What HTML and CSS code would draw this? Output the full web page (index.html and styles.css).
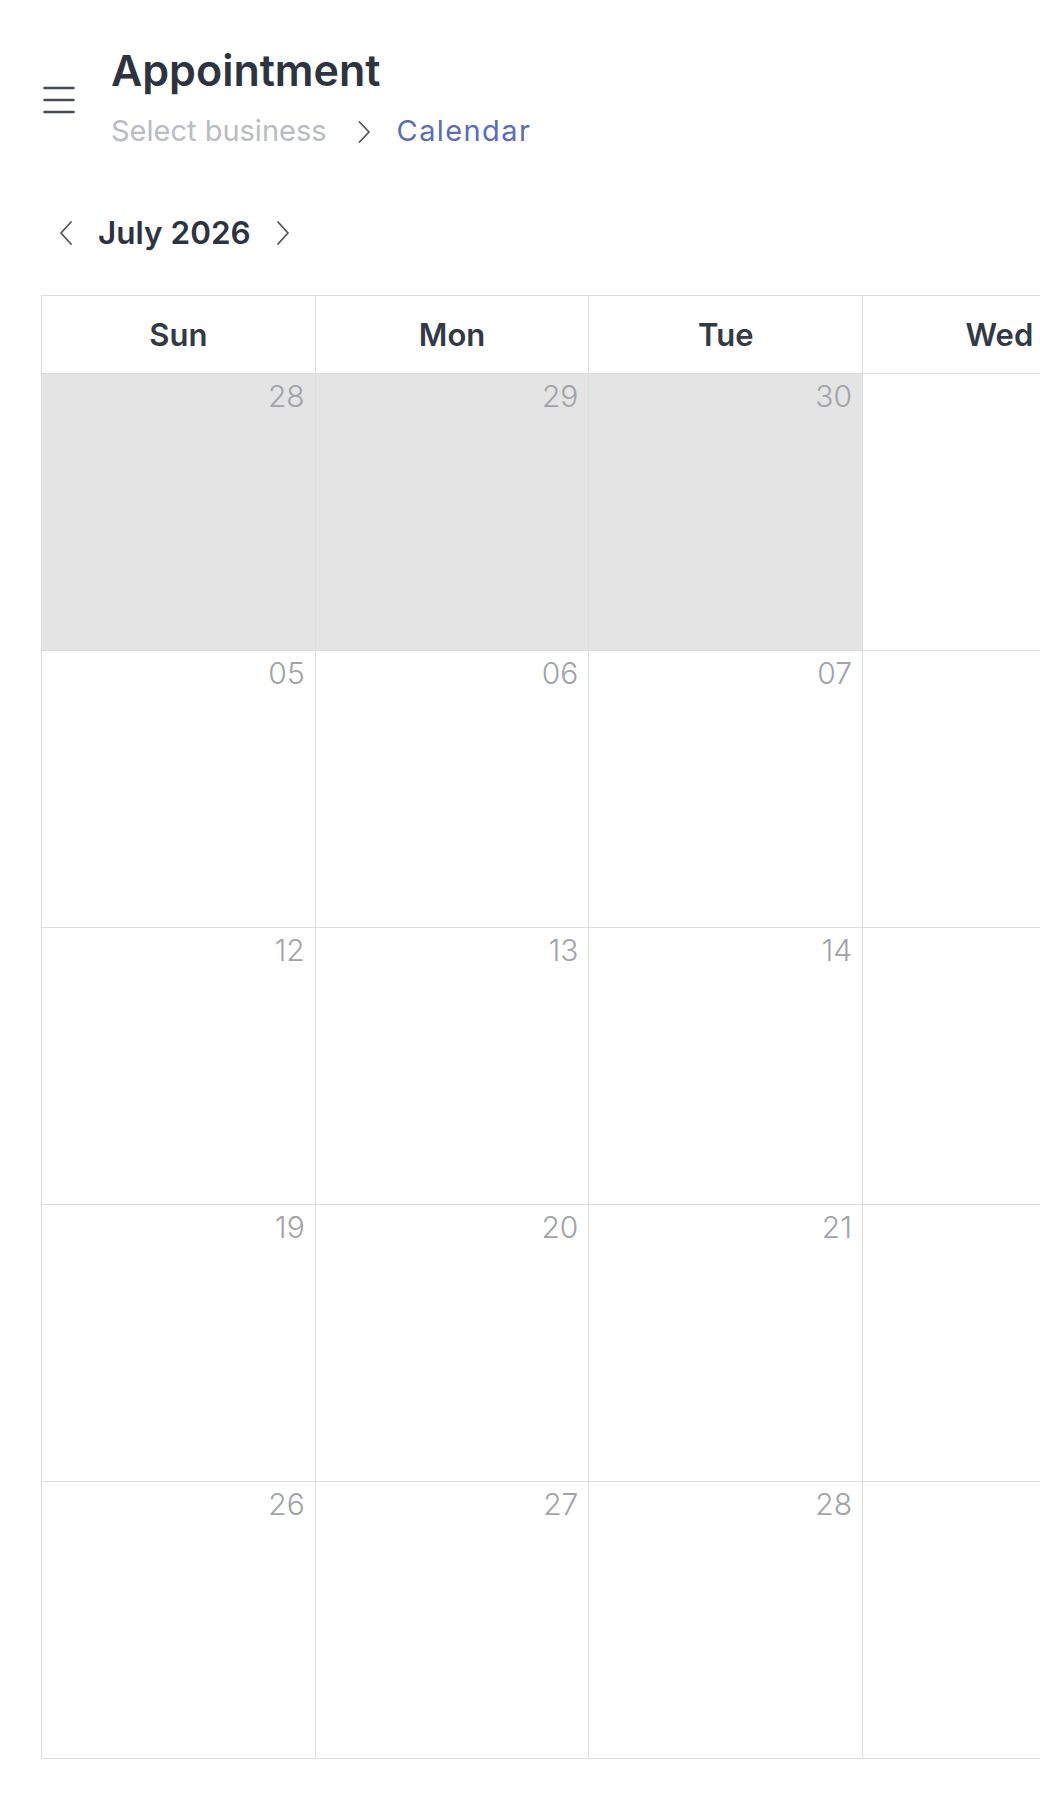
FILE: index.html
```html
<!DOCTYPE html>
<html lang="en">
<head>
<meta charset="utf-8">
<title>Appointment – Calendar</title>
<link rel="stylesheet" href="styles.css">
</head>
<body>
<div class="page">
  <header class="topbar">
    <button class="menu-btn" aria-label="Menu">
      <svg width="32" height="28" viewBox="0 0 32 28" fill="none" stroke="#454b57" stroke-width="2.5" stroke-linecap="round">
        <line x1="1.5" y1="2" x2="30.5" y2="2"/>
        <line x1="1.5" y1="14" x2="30.5" y2="14"/>
        <line x1="1.5" y1="26" x2="30.5" y2="26"/>
      </svg>
    </button>
    <div class="titles">
      <h1 class="title">Appointment</h1>
      <nav class="crumbs">
        <span class="crumb crumb-muted">Select business</span>
        <svg class="crumb-sep" width="14" height="24" viewBox="0 0 14 24" fill="none" stroke="#50545c" stroke-width="1.8" stroke-linecap="round" stroke-linejoin="round">
          <polyline points="2.5,2 12,12 2.5,22"/>
        </svg>
        <span class="crumb crumb-active">Calendar</span>
      </nav>
    </div>
  </header>

  <div class="month-nav">
    <svg class="month-arrow" width="16" height="26" viewBox="0 0 16 26" fill="none" stroke="#50545c" stroke-width="1.8" stroke-linecap="round" stroke-linejoin="round">
      <polyline points="13,2 3,13 13,24"/>
    </svg>
    <span class="month-label">July 2026</span>
    <svg class="month-arrow" width="16" height="26" viewBox="0 0 16 26" fill="none" stroke="#50545c" stroke-width="1.8" stroke-linecap="round" stroke-linejoin="round">
      <polyline points="3,2 13,13 3,24"/>
    </svg>
  </div>

  <div class="calendar-wrap">
    <div class="calendar">
      <div class="dow">Sun</div>
      <div class="dow">Mon</div>
      <div class="dow">Tue</div>
      <div class="dow">Wed</div>
      <div class="dow">Thu</div>
      <div class="dow">Fri</div>
      <div class="dow">Sat</div>

      <div class="day outside"><span class="num">28</span></div>
      <div class="day outside"><span class="num">29</span></div>
      <div class="day outside"><span class="num">30</span></div>
      <div class="day"><span class="num">01</span></div>
      <div class="day"><span class="num">02</span></div>
      <div class="day"><span class="num">03</span></div>
      <div class="day"><span class="num">04</span></div>

      <div class="day"><span class="num">05</span></div>
      <div class="day"><span class="num">06</span></div>
      <div class="day"><span class="num">07</span></div>
      <div class="day"><span class="num">08</span></div>
      <div class="day"><span class="num">09</span></div>
      <div class="day"><span class="num">10</span></div>
      <div class="day"><span class="num">11</span></div>

      <div class="day"><span class="num">12</span></div>
      <div class="day"><span class="num">13</span></div>
      <div class="day"><span class="num">14</span></div>
      <div class="day"><span class="num">15</span></div>
      <div class="day"><span class="num">16</span></div>
      <div class="day"><span class="num">17</span></div>
      <div class="day"><span class="num">18</span></div>

      <div class="day"><span class="num">19</span></div>
      <div class="day"><span class="num">20</span></div>
      <div class="day"><span class="num">21</span></div>
      <div class="day"><span class="num">22</span></div>
      <div class="day"><span class="num">23</span></div>
      <div class="day"><span class="num">24</span></div>
      <div class="day"><span class="num">25</span></div>

      <div class="day"><span class="num">26</span></div>
      <div class="day"><span class="num">27</span></div>
      <div class="day"><span class="num">28</span></div>
      <div class="day"><span class="num">29</span></div>
      <div class="day"><span class="num">30</span></div>
      <div class="day"><span class="num">31</span></div>
      <div class="day outside"><span class="num">01</span></div>
    </div>
  </div>
</div>
</body>
</html>
```

FILE: styles.css
```css
* {
  box-sizing: border-box;
}

html, body {
  margin: 0;
  padding: 0;
  background: #ffffff;
}

body {
  font-family: Inter, "Noto Sans", "DejaVu Sans", sans-serif;
  color: #2e3340;
  overflow: hidden;
}

.page {
  width: 1040px;
  min-height: 1800px;
  padding-top: 44px;
}

/* ---------- top bar ---------- */
.topbar {
  display: flex;
  align-items: center;
  padding-left: 43px;
  gap: 36px;
}

.menu-btn {
  display: flex;
  align-items: center;
  justify-content: center;
  width: 32px;
  height: 28px;
  padding: 0;
  margin-top: 6px;
  border: 0;
  background: none;
}

.titles {
  display: flex;
  flex-direction: column;
}

.title {
  margin: 0;
  font-size: 43px;
  line-height: 52px;
  font-weight: 600;
  color: #2e3340;
  letter-spacing: 0;
}

.crumbs {
  display: flex;
  align-items: center;
  margin-top: 17px;
  height: 36px;
}

.crumb {
  font-size: 29px;
  line-height: 36px;
  font-weight: 400;
}

.crumb-muted {
  color: #b9bcc3;
  letter-spacing: 0;
}

.crumb-active {
  color: #5c6cb8;
  letter-spacing: 1.4px;
}

.crumb-sep {
  margin: 2px 26px 0 30px;
}

/* ---------- month nav ---------- */
.month-nav {
  display: flex;
  align-items: center;
  gap: 24px;
  margin-top: 64px;
  padding-left: 58px;
  height: 40px;
}

.month-label {
  font-size: 31.5px;
  line-height: 40px;
  font-weight: 600;
  color: #2e3340;
}

/* ---------- calendar ---------- */
.calendar-wrap {
  margin-top: 42px;
  margin-left: 41px;
  overflow: hidden;
}

.calendar {
  display: grid;
  grid-template-columns: repeat(7, 273.7px);
  grid-auto-rows: 277px;
  grid-template-rows: 78px;
  width: max-content;
  border-top: 1px solid #dedede;
  border-left: 1px solid #dedede;
}

.dow {
  display: flex;
  align-items: center;
  justify-content: center;
  border-right: 1px solid #dedede;
  border-bottom: 1px solid #dedede;
  font-size: 31px;
  font-weight: 600;
  color: #333945;
}

.day {
  display: flex;
  justify-content: flex-end;
  align-items: flex-start;
  padding: 4px 10px 0 0;
  border-right: 1px solid #dedede;
  border-bottom: 1px solid #dedede;
  background: #ffffff;
}

.day.outside {
  background: #e4e4e4;
}

.num {
  font-size: 30px;
  line-height: 36px;
  font-weight: 300;
  color: #a0a3a8;
}
```
